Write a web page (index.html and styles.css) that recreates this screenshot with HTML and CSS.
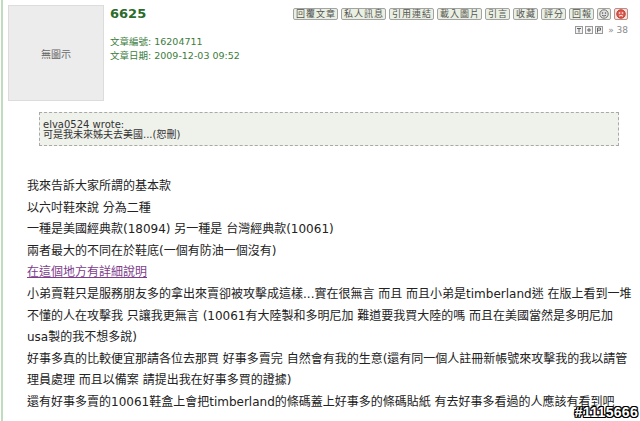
FILE: index.html
```html
<!DOCTYPE html>
<html lang="zh-Hant">
<head>
    <meta charset="UTF-8">
    <meta name="viewport" content="width=device-width, initial-scale=1.0">
    <title>6625</title>
    <link rel="stylesheet" href="styles.css">
</head>
<body>

    <div class="page">
        <!-- cabecera del mensaje -->
        <div class="post-head">
            <div class="avatar">無圖示</div>

            <div class="post-info">
                <div class="post-title">6625</div>
                <div class="post-meta">
                    文章編號: 16204711<br>
                    文章日期: 2009-12-03 09:52
                </div>
            </div>

            <div class="post-tools">
                <div class="tool-buttons">
                    <span class="tool-btn">回覆文章</span>
                    <span class="tool-btn">私人訊息</span>
                    <span class="tool-btn">引用連結</span>
                    <span class="tool-btn">載入圖片</span>
                    <span class="tool-btn">引言</span>
                    <span class="tool-btn">收藏</span>
                    <span class="tool-btn">評分</span>
                    <span class="tool-btn">回報</span>
                    <span class="tool-btn tool-icon">
                        <svg width="10" height="10" viewBox="0 0 10 10">
                            <circle cx="5" cy="5" r="4.2" fill="#e4e4e4" stroke="#6f6f6f" stroke-width="1"/>
                            <circle cx="3.5" cy="4" r="0.8" fill="#555"/>
                            <circle cx="6.5" cy="4" r="0.8" fill="#555"/>
                            <path d="M3 6.2 Q5 8 7 6.2" stroke="#555" stroke-width="0.9" fill="none"/>
                        </svg>
                    </span>
                    <span class="tool-btn tool-icon tool-icon-red">
                        <svg width="10" height="10" viewBox="0 0 10 10">
                            <circle cx="5" cy="5" r="4.2" fill="#e25a4e" stroke="#b3362c" stroke-width="1"/>
                            <circle cx="3.5" cy="4" r="0.8" fill="#fff"/>
                            <circle cx="6.5" cy="4" r="0.8" fill="#fff"/>
                            <path d="M3 7.2 Q5 5.6 7 7.2" stroke="#fff" stroke-width="0.9" fill="none"/>
                        </svg>
                    </span>
                </div>

                <div class="post-nav">
                    <svg width="8" height="8" viewBox="0 0 8 8">
                        <rect x="0.5" y="0.5" width="7" height="7" fill="#f2f2f2" stroke="#9a9a9a"/>
                        <path d="M2 2.5 H6 M4 2.5 V6.5" stroke="#666" stroke-width="1"/>
                    </svg>
                    <svg width="8" height="8" viewBox="0 0 8 8">
                        <rect x="0.5" y="0.5" width="7" height="7" fill="#f2f2f2" stroke="#9a9a9a"/>
                        <path d="M2 4 H6 M4 2 V6" stroke="#666" stroke-width="1"/>
                    </svg>
                    <svg width="8" height="8" viewBox="0 0 8 8">
                        <rect x="0.5" y="0.5" width="7" height="7" fill="#f2f2f2" stroke="#9a9a9a"/>
                        <path d="M2.5 6.5 V2 H5.5 V4.2 H2.5" stroke="#666" stroke-width="1" fill="none"/>
                    </svg>
                    <span class="nav-count">» 38</span>
                </div>
            </div>
        </div>

        <!-- cita -->
        <div class="quote">
            elva0524 wrote:<br>
            可是我未來姊夫去美國...(恕刪)
        </div>

        <!-- contenido del mensaje -->
        <div class="post-body">
            我來告訴大家所謂的基本款<br>
            以六吋鞋來說 分為二種<br>
            一種是美國經典款(18094) 另一種是 台灣經典款(10061)<br>
            兩者最大的不同在於鞋底(一個有防油一個沒有)<br>
            <a href="#" class="post-link">在這個地方有詳細說明</a><br>
            小弟賣鞋只是服務朋友多的拿出來賣卻被攻擊成這樣...實在很無言 而且 而且小弟是timberland迷 在版上看到一堆<br>
            不懂的人在攻擊我 只讓我更無言 (10061有大陸製和多明尼加 難道要我買大陸的嗎 而且在美國當然是多明尼加<br>
            usa製的我不想多說)<br>
            好事多真的比較便宜那請各位去那買 好事多賣完 自然會有我的生意(還有同一個人註冊新帳號來攻擊我的我以請管<br>
            理員處理 而且以備案 請提出我在好事多買的證據)<br>
            還有好事多賣的10061鞋盒上會把timberland的條碼蓋上好事多的條碼貼紙 有去好事多看過的人應該有看到吧
        </div>

        <div class="watermark">#1115666</div>
    </div>

</body>
</html>
```

FILE: styles.css
```css
body {
    margin: 0;
    background-color: #fff;
    font-family: "DejaVu Sans", "Noto Sans CJK TC", sans-serif;
    overflow: hidden;
}

.page {
    position: relative;
    box-sizing: border-box;
    height: 421px;
    margin-left: 1px;
    border-left: 2px solid #bfdcbf;
    padding: 5px 12px 0 5px;
    overflow: hidden;
}

.post-head {
    display: flex;
    align-items: flex-start;
}

.avatar {
    width: 94px;
    height: 94px;
    border: 1px solid #dcdcdc;
    background-color: #ececec;
    display: flex;
    align-items: center;
    justify-content: center;
    font-size: 10px;
    color: #666;
    font-family: "Noto Sans CJK TC", sans-serif;
}

.post-info {
    flex: 1;
    margin-left: 6px;
}

.post-title {
    font-size: 13px;
    font-weight: bold;
    line-height: 16px;
    margin-top: 1px;
    color: #2b6b2b;
}

.post-meta {
    margin-top: 13px;
    font-family: "DejaVu Sans", "Noto Sans CJK TC", sans-serif;
    font-size: 9.5px;
    line-height: 14px;
    color: #3b7d3b;
}

.post-tools {
    display: flex;
    flex-direction: column;
    align-items: flex-end;
    margin-top: 3px;
}

.tool-buttons {
    display: flex;
    gap: 3px;
}

.tool-btn {
    display: inline-flex;
    align-items: center;
    height: 10px;
    padding: 0 1px 0 2px;
    border: 1px solid #a3a3a3;
    border-radius: 2px;
    background-color: #e9efe1;
    font-family: "Noto Sans CJK TC", sans-serif;
    font-size: 9px;
    letter-spacing: 1px;
    line-height: 10px;
    color: #555;
}

.tool-icon {
    padding: 0 1px;
    letter-spacing: 0;
}

.tool-icon-red {
    border-color: #c48a84;
    background-color: #f3e2de;
}

.post-nav {
    display: flex;
    align-items: center;
    gap: 2px;
    margin-top: 5px;
    height: 10px;
}

.nav-count {
    margin-left: 3px;
    font-size: 9px;
    color: #8a8a8a;
}

.quote {
    margin: 11px 9px 0 31px;
    padding: 7px 3px 5px;
    border: 1px dashed #a9a9a9;
    background-color: #eff1eb;
    font-size: 10px;
    line-height: 10px;
    color: #333;
}

.post-body {
    margin: 30px 0 0 19px;
    font-size: 12px;
    line-height: 21.6px;
    color: #222;
    white-space: nowrap;
}

.post-link {
    color: #7d3c8c;
    text-decoration: underline;
}

.watermark {
    position: absolute;
    right: 2px;
    bottom: 1px;
    font-family: "Liberation Sans", sans-serif;
    font-size: 14px;
    font-weight: bold;
    letter-spacing: 0.3px;
    color: #fff;
    text-shadow: -1px -1px 0 #000, 1px -1px 0 #000, -1px 1px 0 #000, 1px 1px 0 #000,
                 0 1px 0 #000, 0 -1px 0 #000, 1px 0 0 #000, -1px 0 0 #000;
}
```
